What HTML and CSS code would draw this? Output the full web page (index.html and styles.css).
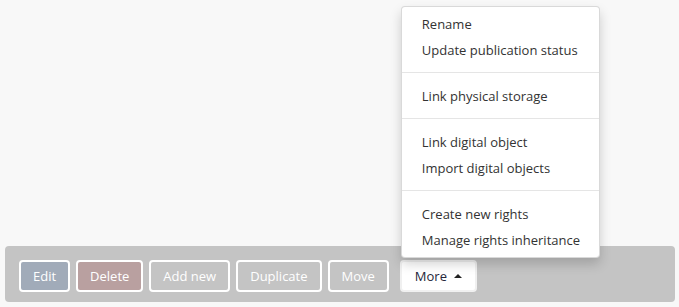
FILE: index.html
```html
<!DOCTYPE html>
<html lang="en">
<head>
    <meta charset="UTF-8">
    <meta name="viewport" content="width=device-width, initial-scale=1.0">
    <title>Record actions</title>
    <link rel="stylesheet" href="styles.css">
</head>
<body>
    <div class="page">
        <div class="toolbar">
            <button class="btn btn-edit">Edit</button>
            <button class="btn btn-delete">Delete</button>
            <button class="btn">Add new</button>
            <button class="btn">Duplicate</button>
            <button class="btn">Move</button>
            <div class="dropup">
                <button class="btn btn-more">More <span class="caret"></span></button>
                <ul class="dropdown-menu">
                    <li><a href="#">Rename</a></li>
                    <li><a href="#">Update publication status</a></li>
                    <li class="divider"></li>
                    <li><a href="#">Link physical storage</a></li>
                    <li class="divider"></li>
                    <li><a href="#">Link digital object</a></li>
                    <li><a href="#">Import digital objects</a></li>
                    <li class="divider"></li>
                    <li><a href="#">Create new rights</a></li>
                    <li><a href="#">Manage rights inheritance</a></li>
                </ul>
            </div>
        </div>
    </div>
</body>
</html>
```

FILE: styles.css
```css
* {
    margin: 0;
    padding: 0;
    box-sizing: border-box;
    font-family: 'Open Sans', sans-serif;
}

html, body {
    height: 100%;
}

body {
    background: #f8f8f8;
    color: #333;
    font-size: 13px;
    line-height: 18px;
}

.page {
    height: 100%;
    display: flex;
    flex-direction: column;
    justify-content: flex-end;
    padding: 0 4px 5px 5px;
}

.toolbar {
    display: flex;
    align-items: center;
    gap: 6px;
    background: #c4c4c4;
    border-radius: 4px;
    padding: 14px 14px 10px;
}

.btn {
    font-size: 13px;
    line-height: 18px;
    padding: 5px 12px;
    border: 2px solid #fff;
    border-radius: 4px;
    background: transparent;
    color: #fff;
    cursor: pointer;
}

.btn-edit {
    background: #a1abb9;
}

.btn-delete {
    background: #b9a0a0;
}

.dropup {
    position: relative;
    margin-left: 5px;
}

.btn-more {
    background: #fff;
    color: #26263a;
    border-color: #f0f0f0;
    padding: 5px 13px;
}

.caret {
    display: inline-block;
    width: 0;
    height: 0;
    margin-left: 4px;
    vertical-align: 3px;
    border-left: 4px solid transparent;
    border-right: 4px solid transparent;
    border-bottom: 4px solid #222;
}

.dropdown-menu {
    position: absolute;
    left: 1px;
    bottom: calc(100% + 2px);
    width: 199px;
    list-style: none;
    background: #fff;
    border: 1px solid rgba(0, 0, 0, 0.15);
    border-radius: 4px;
    box-shadow: 0 6px 12px rgba(0, 0, 0, 0.175);
    padding: 4px 0;
}

.dropdown-menu a {
    display: block;
    padding: 4px 20px;
    color: #333;
    text-decoration: none;
    white-space: nowrap;
}

.divider {
    height: 1px;
    background: #e5e5e5;
    margin: 9px 0 10px;
}
```
